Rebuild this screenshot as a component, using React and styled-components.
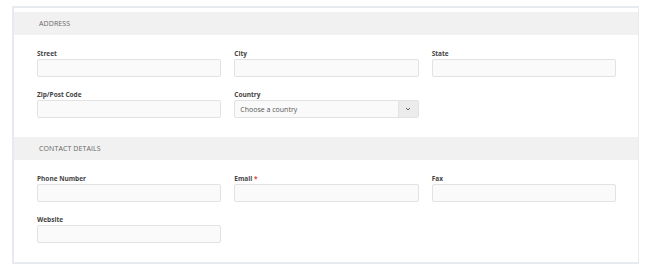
import styled, { createGlobalStyle } from "styled-components";

const GlobalStyle = createGlobalStyle`
  body {
    margin: 0;
    background: #ffffff;
    font-family: "Open Sans", "Liberation Sans", sans-serif;
  }
`;

const App = () => {
  return (
    <Page>
      <GlobalStyle />
      <Card>
        <SectionHeader>Address</SectionHeader>
        <SectionBody>
          <Field>
            <Label>Street</Label>
            <Input />
          </Field>
          <Field>
            <Label>City</Label>
            <Input />
          </Field>
          <Field>
            <Label>State</Label>
            <Input />
          </Field>
          <Field>
            <Label>Zip/Post Code</Label>
            <Input />
          </Field>
          <Field>
            <Label>Country</Label>
            <SelectBox>
              <SelectText>Choose a country</SelectText>
              <SelectArrow>
                <svg width="6" height="4" viewBox="0 0 6 4">
                  <path d="M1 1 L3 3 L5 1" fill="none" stroke="#666" strokeWidth="1" />
                </svg>
              </SelectArrow>
            </SelectBox>
          </Field>
        </SectionBody>

        <SectionHeader>Contact Details</SectionHeader>
        <SectionBody>
          <Field>
            <Label>Phone Number</Label>
            <Input />
          </Field>
          <Field>
            <Label>
              Email <Required>*</Required>
            </Label>
            <Input />
          </Field>
          <Field>
            <Label>Fax</Label>
            <Input />
          </Field>
          <Field>
            <Label>Website</Label>
            <Input />
          </Field>
        </SectionBody>
      </Card>
    </Page>
  );
};

export default App;

const Page = styled.div`
  padding: 6px 8px 0 12px;
  width: 647px;
  box-sizing: border-box;
`;

const Card = styled.div`
  width: 627px;
  box-sizing: border-box;
  border: 2px solid #e7eaee;
  border-right-width: 1px;
  padding-top: 4px;
  background: #fff;
`;

const SectionHeader = styled.div`
  height: 23px;
  display: flex;
  align-items: center;
  padding-left: 25px;
  background: #f1f1f1;
  color: #666;
  font-size: 7px;
  text-transform: uppercase;
  letter-spacing: 0.1px;
`;

const SectionBody = styled.div`
  display: grid;
  grid-template-columns: repeat(3, minmax(0, 1fr));
  column-gap: 13px;
  row-gap: 13px;
  padding: 14px 22px 19px 23px;
`;

const Field = styled.div`
  display: flex;
  flex-direction: column;
  min-width: 0;
`;

const Label = styled.label`
  font-size: 6.5px;
  line-height: 9px;
  font-weight: 700;
  color: #444;
  margin-bottom: 1px;
`;

const Required = styled.span`
  color: #e0403a;
`;

const Input = styled.input`
  width: 100%;
  min-width: 0;
  height: 18px;
  box-sizing: border-box;
  border: 1px solid #e2e2e2;
  border-radius: 2px;
  background: #fafafa;
  outline: none;
  padding: 0 5px;
`;

const SelectBox = styled.div`
  height: 18px;
  box-sizing: border-box;
  display: flex;
  border: 1px solid #e2e2e2;
  border-radius: 2px;
  background: #fafafa;
  overflow: hidden;
`;

const SelectText = styled.span`
  flex: 1;
  display: flex;
  align-items: center;
  padding-left: 5px;
  font-size: 7px;
  color: #555;
`;

const SelectArrow = styled.span`
  width: 19px;
  display: flex;
  align-items: center;
  justify-content: center;
  background: #ececec;
  border-left: 1px solid #e2e2e2;
`;
